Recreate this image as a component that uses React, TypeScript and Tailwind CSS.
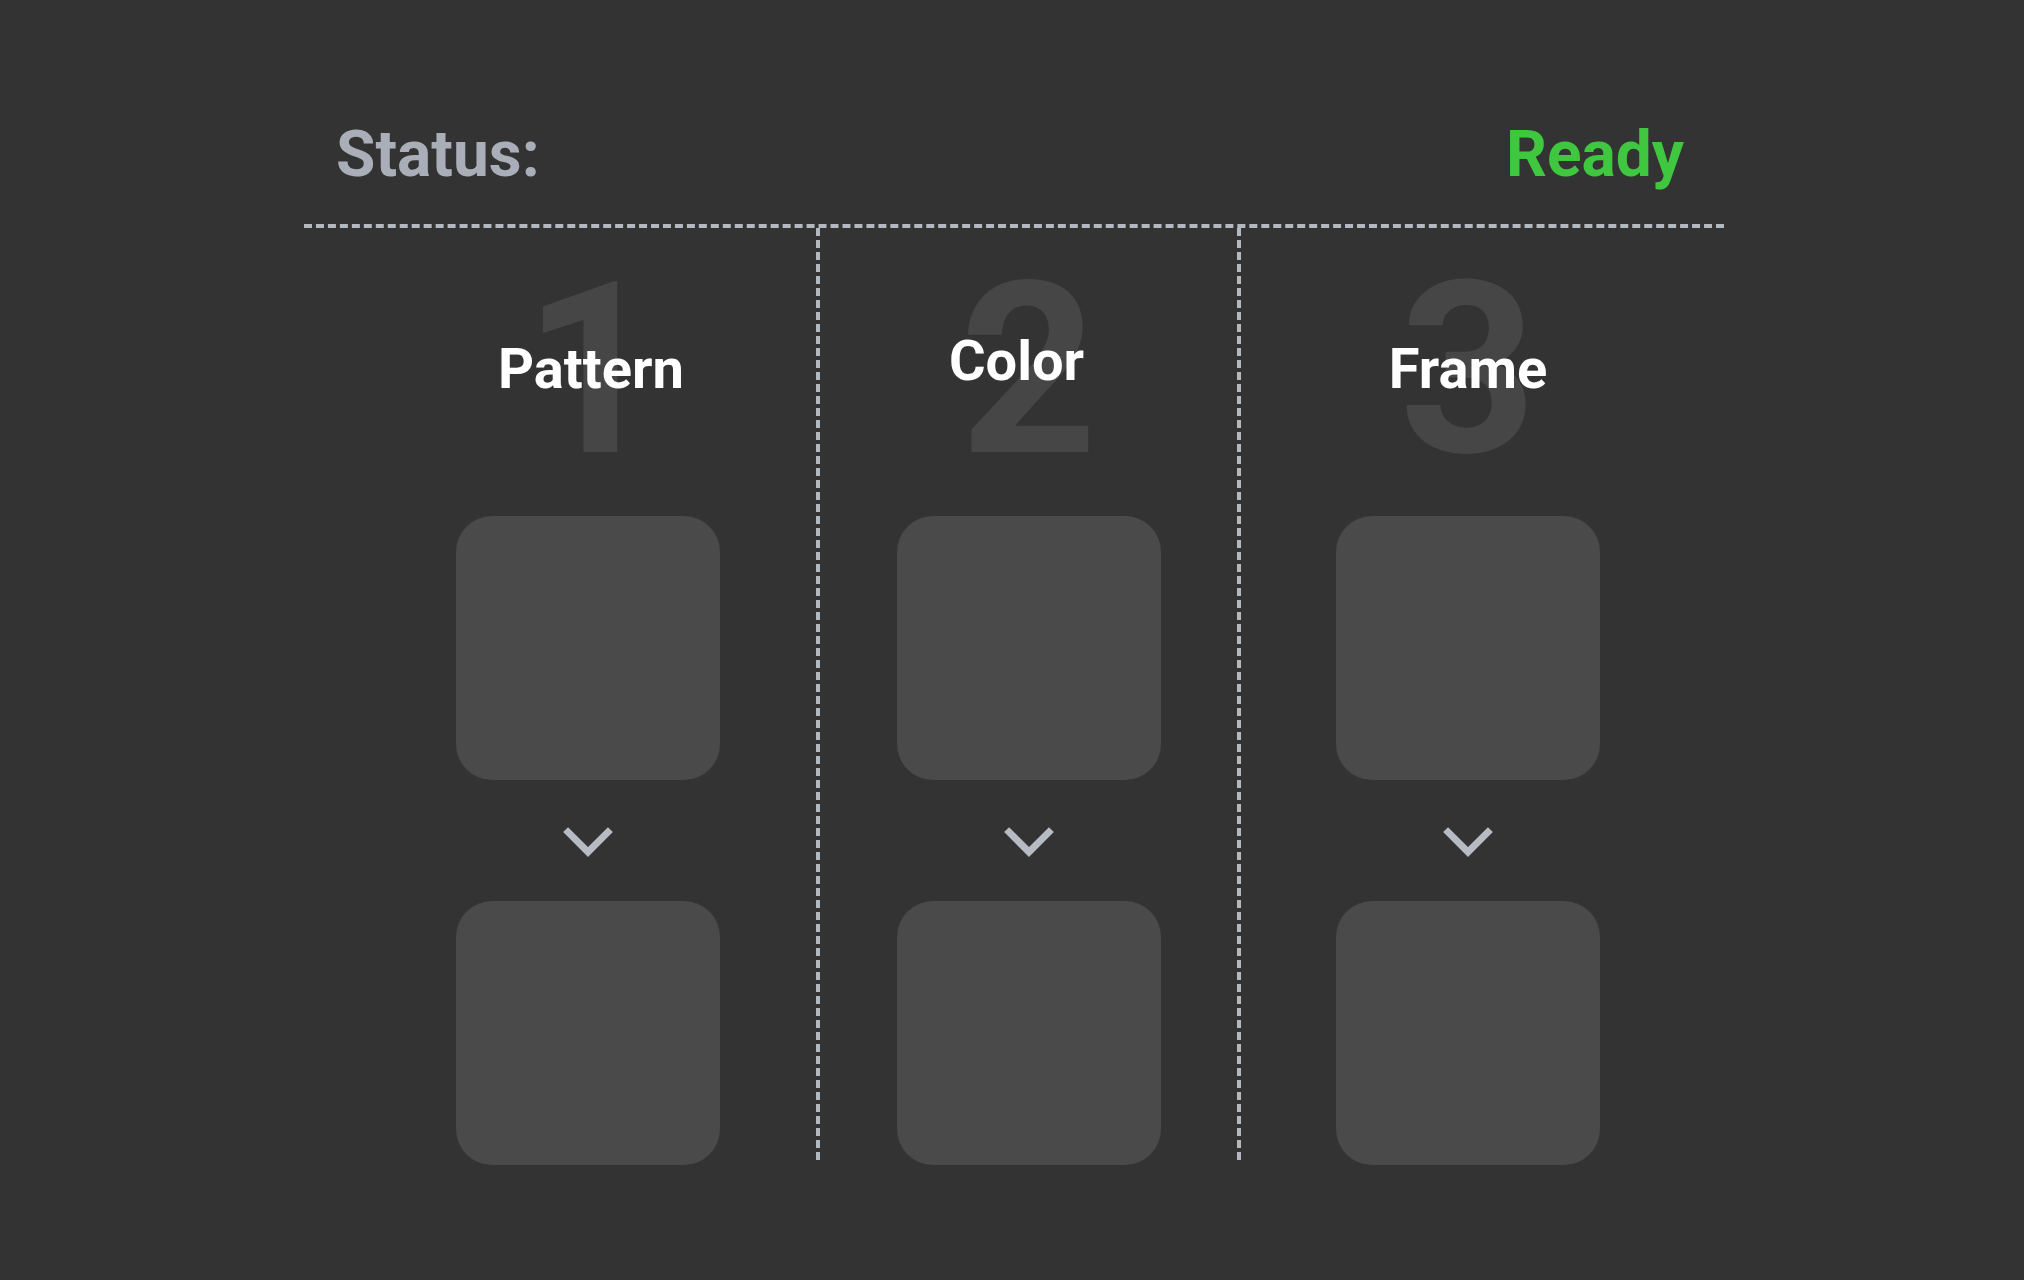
import React from "react";

const Chevron = () => (
  <svg width="50" height="32" viewBox="0 0 50 32" className="block shrink-0 mt-[47px] mb-[42px]">
    <polyline
      points="2.6,2.6 25,25 47.4,2.6"
      fill="none"
      stroke="#b7bbc4"
      strokeWidth="7"
      strokeLinecap="butt"
      strokeLinejoin="miter"
    />
  </svg>
);

const Box = () => <div className="w-[264px] h-[264px] rounded-[36px] bg-[#4a4a4a] shrink-0" />;

type ColProps = { num: string; label: string; labelClass: string; colClass: string; numClass?: string };

const Column = ({ num, label, labelClass, colClass, numClass = "" }: ColProps) => (
  <div className={"h-[932px] flex flex-col items-center " + colClass}>
    <div className="relative shrink-0 mt-[22px] h-[240px] flex justify-center">
      <span className={"text-[240px] leading-none font-bold text-[#464646] select-none " + numClass}>{num}</span>
      <span className={"absolute whitespace-nowrap text-[56px] leading-none font-bold text-white " + labelClass}>
        {label}
      </span>
    </div>
    <div className="mt-[26px] shrink-0">
      <Box />
    </div>
    <Chevron />
    <Box />
  </div>
);

export default function App() {
  return (
    <div className="min-h-screen w-full bg-[#333333] pt-[123px]" style={{ fontFamily: "Roboto, 'Noto Sans', sans-serif" }}>
      <div className="w-[1420px] ml-[304px]">
        <header className="flex items-start justify-between pl-8 pr-10 pb-[37px] border-b-4 border-dashed border-[#b4b8c0]">
          <span className="text-[64px] leading-none font-bold text-[#a9aeb8]">Status:</span>
          <span className="text-[64px] leading-none font-bold text-[#3fc83f]">Ready</span>
        </header>
        <div className="flex">
          <Column
            num="1"
            label="Pattern"
            numClass="ml-[8px]"
            labelClass="top-[91px] left-[calc(50%+3px)] -translate-x-1/2"
            colClass="w-[516px] pl-[56px] border-r-4 border-dashed border-[#b4b8c0]"
          />
          <Column
            num="2"
            label="Color"
            labelClass="top-[83px] left-[calc(50%-12px)] -translate-x-1/2"
            colClass="w-[421px] border-r-4 border-dashed border-[#b4b8c0]"
          />
          <Column
            num="3"
            label="Frame"
            labelClass="top-[91px] left-1/2 -translate-x-1/2"
            colClass="w-[483px] pr-[29px]"
          />
        </div>
      </div>
    </div>
  );
}
